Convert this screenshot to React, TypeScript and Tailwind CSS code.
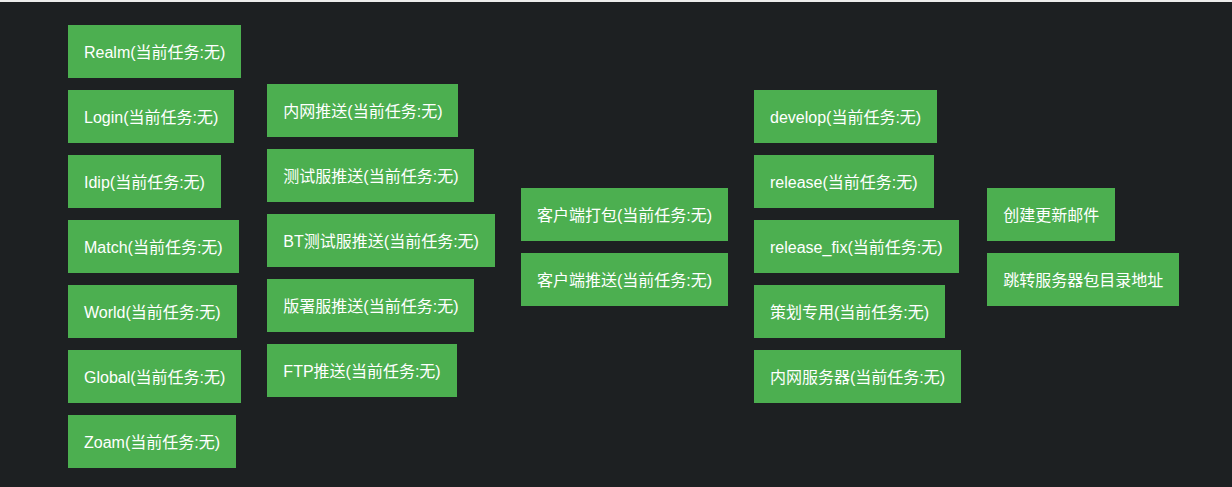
const columns: { items: string[]; extra?: string }[] = [
  {
    items: [
      'Realm(当前任务:无)',
      'Login(当前任务:无)',
      'Idip(当前任务:无)',
      'Match(当前任务:无)',
      'World(当前任务:无)',
      'Global(当前任务:无)',
      'Zoam(当前任务:无)',
    ],
  },
  {
    items: [
      '内网推送(当前任务:无)',
      '测试服推送(当前任务:无)',
      'BT测试服推送(当前任务:无)',
      '版署服推送(当前任务:无)',
      'FTP推送(当前任务:无)',
    ],
    extra: 'pb-[12px]',
  },
  {
    items: ['客户端打包(当前任务:无)', '客户端推送(当前任务:无)'],
  },
  {
    items: [
      'develop(当前任务:无)',
      'release(当前任务:无)',
      'release_fix(当前任务:无)',
      '策划专用(当前任务:无)',
      '内网服务器(当前任务:无)',
    ],
  },
  {
    items: ['创建更新邮件', '跳转服务器包目录地址'],
  },
];

function TaskButton({ label }: { label: string }) {
  return (
    <button className="h-[53px] px-4 pt-[2px] bg-[#4caf50] text-white text-[16px] leading-[21px] whitespace-nowrap text-left cursor-pointer">
      {label}
    </button>
  );
}

export default function App() {
  return (
    <div
      className="h-[487px] overflow-hidden flex flex-col bg-[#1d2022]"
      style={{ fontFamily: '"Liberation Sans", Arial, "Noto Sans CJK SC", sans-serif' }}
    >
      <div className="h-[2px] bg-[#ececec]" />
      <div className="flex-1 flex items-center gap-[26px] pl-[68px] pt-[4px]">
        {columns.map((col, i) => (
          <div key={i} className={`flex flex-col items-start gap-3 ${col.extra ?? ''}`}>
            {col.items.map((label) => (
              <TaskButton key={label} label={label} />
            ))}
          </div>
        ))}
      </div>
    </div>
  );
}
